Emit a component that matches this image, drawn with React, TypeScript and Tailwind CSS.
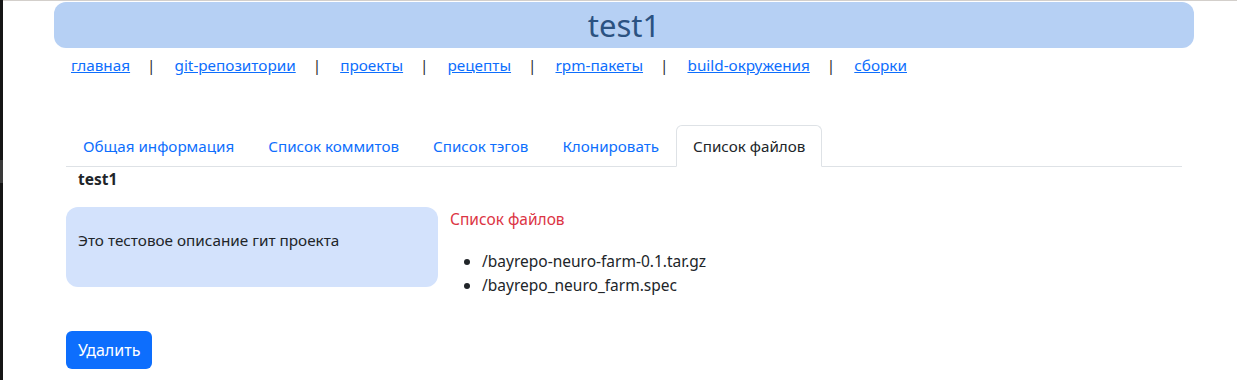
const navLinks = [
  "главная",
  "git-репозитории",
  "проекты",
  "рецепты",
  "rpm-пакеты",
  "build-окружения",
  "сборки",
];

const tabs = [
  { title: "Общая информация", active: false },
  { title: "Список коммитов", active: false },
  { title: "Список тэгов", active: false },
  { title: "Клонировать", active: false },
  { title: "Список файлов", active: true },
];

const files = ["/bayrepo-neuro-farm-0.1.tar.gz", "/bayrepo_neuro_farm.spec"];

export default function App() {
  return (
    <div className="flex min-h-[380px] bg-white font-['Noto_Sans',sans-serif] text-[16px] leading-6 text-[#212529]">
      {/* window edge */}
      <div className="flex w-[3px] shrink-0 flex-col">
        <div className="h-[160px] bg-[#161616]" />
        <div className="h-[23px] bg-[#3a3a3a]" />
        <div className="flex-1 bg-[#161616]" />
      </div>

      <div className="flex-1 border-t border-[#d3cfcb]">
        <div className="ml-[51px] w-[1140px]">
          {/* Header */}
          <div className="mt-[1px] flex h-[46px] items-center justify-center rounded-[12px] bg-[#b6d0f4]">
            <h1 className="text-[31px] leading-none text-[#2b5281]">test1</h1>
          </div>

          {/* Top menu */}
          <div className="mt-[5px] flex pl-[17px] text-[15.3px]">
            {navLinks.map((link, i) => (
              <div key={link} className="flex">
                {i > 0 && <span className="ml-[17px] mr-[19px] text-[#2a2a2a]">|</span>}
                <a href="#" className="text-[#0d6efd] underline">
                  {link}
                </a>
              </div>
            ))}
          </div>

          <div className="mt-[48px] px-3">
            {/* Tabs */}
            <ul className="flex border-b border-[#dee2e6] text-[15.2px]">
              {tabs.map((tab) => (
                <li key={tab.title} className="-mb-px">
                  <a
                    href="#"
                    className={
                      tab.active
                        ? "block rounded-t-[6px] border border-[#dee2e6] border-b-white bg-white px-4 py-2 text-[#212529]"
                        : "block rounded-t-[6px] border border-transparent px-4 py-2 text-[#0d6efd]"
                    }
                  >
                    {tab.title}
                  </a>
                </li>
              ))}
            </ul>

            <div className="px-3 font-bold text-[15.5px]">test1</div>

            {/* Content row */}
            <div className="mt-[16px] flex">
              <div className="h-[80px] w-[372px] shrink-0 rounded-[12px] bg-[#d3e2fc] px-3 pt-[21px] text-[15.3px]">
                Это тестовое описание гит проекта
              </div>
              <div className="pl-3 text-[15.5px]">
                <h5 className="text-[#dc3545]">Список файлов</h5>
                <ul className="mt-[18px] list-disc pl-8">
                  {files.map((f) => (
                    <li key={f}>{f}</li>
                  ))}
                </ul>
              </div>
            </div>

            <button className="mt-[34px] rounded-[6px] bg-[#0d6efd] px-3 py-[7px] text-white">
              Удалить
            </button>
          </div>
        </div>
      </div>
    </div>
  );
}
